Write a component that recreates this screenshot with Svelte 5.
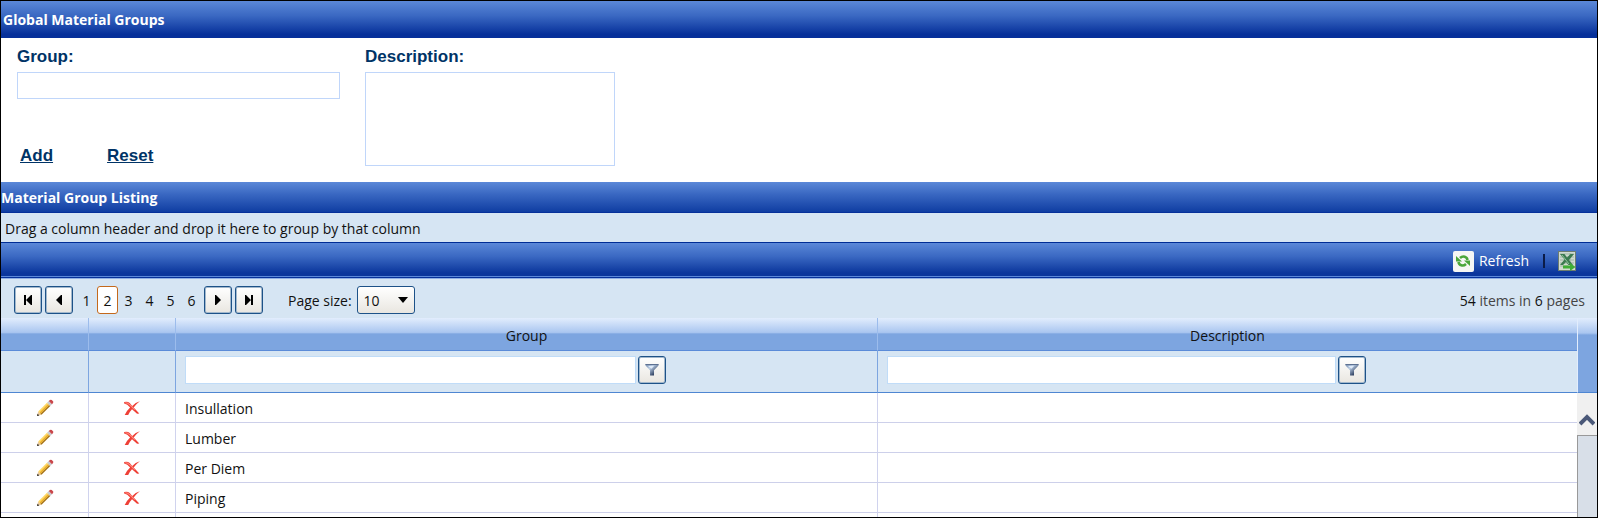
<script>
  // Material group maintenance: entry form on top, paged and filterable grid below.
  let group = $state('')
  let description = $state('')
  let groupFilter = $state('')
  let descriptionFilter = $state('')
  let page = $state(2)
  let pageSize = $state('10')

  const pages = [1, 2, 3, 4, 5, 6]
  const total = 54
  let rows = $state([
    { group: 'Insullation', description: '' },
    { group: 'Lumber', description: '' },
    { group: 'Per Diem', description: '' },
    { group: 'Piping', description: '' },
  ])

  let shown = $derived(
    rows.filter(
      (r) =>
        r.group.toLowerCase().includes(groupFilter.toLowerCase()) &&
        r.description.toLowerCase().includes(descriptionFilter.toLowerCase()),
    ),
  )

  function add(e) {
    e.preventDefault()
    if (!group) return
    rows.push({ group, description })
    group = ''
    description = ''
  }

  function reset(e) {
    e.preventDefault()
    group = ''
    description = ''
  }

  function remove(row) {
    rows = rows.filter((r) => r !== row)
  }
</script>

{#snippet funnel()}
  <svg width="14" height="14" viewBox="0 0 14 14">
    <defs>
      <linearGradient id="funnel-fill" x1="0" y1="0" x2="1" y2="1">
        <stop offset="0" stop-color="#6f86a8" />
        <stop offset="0.35" stop-color="#b9cce4" />
        <stop offset="0.75" stop-color="#3b4c6b" />
        <stop offset="1" stop-color="#17233c" />
      </linearGradient>
    </defs>
    <path d="M.5 1h13v1.5L9 7.200v5.300H5V7.200L.5 2.500z" fill="url(#funnel-fill)" />
    <path d="M.5 1.500h13" stroke="#5d7192" />
    <path d="M3 3h6L6.500 5.800z" fill="#dfeaf8" />
  </svg>
{/snippet}

<div class="window">
  <h1 class="bar">Global Material Groups</h1>

  <form class="entry" onsubmit={add}>
    <div class="field left">
      <label for="group">Group:</label>
      <input id="group" type="text" bind:value={group} />
      <div class="actions">
        <a href="#add" onclick={add}>Add</a>
        <a href="#reset" onclick={reset}>Reset</a>
      </div>
    </div>
    <div class="field">
      <label for="description">Description:</label>
      <textarea id="description" bind:value={description}></textarea>
    </div>
  </form>

  <h2 class="bar listing">Material Group Listing</h2>
  <div class="grouping">Drag a column header and drop it here to group by that column</div>

  <div class="commands">
    <button class="refresh">
      <span class="tile">
        <svg width="16" height="16" viewBox="0 0 16 16" fill="none" stroke="#4ba63a" stroke-width="2.600">
          <path d="M12.500 7C12 3.500 8 2.200 5 5" />
          <path d="M3.500 9c.5 3.500 4.500 4.800 7.500 2" />
          <path d="M1 3v5.500h6z" fill="#4ba63a" stroke="none" />
          <path d="M15 13V7.500H9z" fill="#4ba63a" stroke="none" />
        </svg>
      </span>
      Refresh
    </button>
    <span class="divider"></span>
    <button class="export" aria-label="Export to Excel">
      <svg width="18" height="20" viewBox="0 0 18 20">
        <rect x=".5" y=".5" width="17" height="19" fill="#cfdacf" stroke="#6d7d70" />
        <path d="M2 3h14M2 6h14M2 9h14M2 12h14M2 15h8M12 2v10" stroke="#9eb5a3" />
        <path d="M2 3h4.500L9 6.500 12.500 3H16l-5 6 4 5h-4.500L8 11l-3 3H2l4.500-5.500z" fill="#3b7a50" />
        <path d="M4 4l7 9" stroke="#8fc49a" />
        <path d="M5 14.500h7V12l5.500 4-5.500 4v-2.500H5z" fill="#3fae35" />
      </svg>
    </button>
  </div>

  <div class="pager">
    <button class="nav" aria-label="First page" onclick={() => (page = 1)}>
      <svg width="12" height="12" viewBox="0 0 12 12"><path d="M2 1h2v10H2zM9 1v10L4 6zM9 1h1v10H9z" /></svg>
    </button>
    <button class="nav" aria-label="Previous page" onclick={() => (page = Math.max(1, page - 1))}>
      <svg width="12" height="12" viewBox="0 0 12 12"><path d="M9 1v10H8L3 6l5-5z" /></svg>
    </button>
    <div class="numbers">
      {#each pages as p (p)}
        <button class="num" class:current={p === page} onclick={() => (page = p)}>{p}</button>
      {/each}
    </div>
    <button class="nav" aria-label="Next page" onclick={() => (page = Math.min(pages.length, page + 1))}>
      <svg width="12" height="12" viewBox="0 0 12 12"><path d="M3 1v10h1l5-5-5-5z" /></svg>
    </button>
    <button class="nav" aria-label="Last page" onclick={() => (page = pages.length)}>
      <svg width="12" height="12" viewBox="0 0 12 12"><path d="M8 1h2v10H8zM2 1h1l5 5-5 5H2z" /></svg>
    </button>
    <label for="size">Page size:</label>
    <span class="size">
      <select id="size" bind:value={pageSize}>
        <option>10</option>
        <option>20</option>
        <option>50</option>
      </select>
      <svg width="10" height="6" viewBox="0 0 10 6"><path d="M0 0h10L5 6z" /></svg>
    </span>
    <span class="info"><b>{total}</b> items in <b>{pages.length}</b> pages</span>
  </div>

  <div class="grid">
    <table>
      <colgroup>
        <col class="edit" />
        <col class="delete" />
        <col />
        <col />
      </colgroup>
      <thead>
        <tr class="head">
          <th></th>
          <th></th>
          <th>Group</th>
          <th>Description</th>
        </tr>
        <tr class="filter">
          <td></td>
          <td></td>
          <td>
            <div class="search">
              <input type="text" aria-label="Filter group" bind:value={groupFilter} />
              <button class="nav" aria-label="Group filter options">{@render funnel()}</button>
            </div>
          </td>
          <td>
            <div class="search">
              <input type="text" aria-label="Filter description" bind:value={descriptionFilter} />
              <button class="nav" aria-label="Description filter options">{@render funnel()}</button>
            </div>
          </td>
        </tr>
      </thead>
      <tbody>
        {#each shown as row (row.group)}
          <tr>
            <td class="tool">
              <button aria-label="Edit {row.group}">
                <svg width="18" height="18" viewBox="0 0 18 18">
                  <path d="M1 17l1.200-4.500 3.300 3.300z" fill="#e8c999" />
                  <path d="M1 17l.6-2.300 1.700 1.700z" fill="#222" />
                  <path d="M2.200 12.500L11 3.700l1.100 1.100-8.800 8.800z" fill="#ffd964" />
                  <path d="M3.300 13.600l8.800-8.800 1.100 1.100-8.800 8.800z" fill="#f2b21c" />
                  <path d="M4.400 14.700l8.800-8.800 1.100 1.100-8.800 8.800z" fill="#a87416" />
                  <path d="M11 3.700l1.700-1.700L16 5.300 14.300 7z" fill="#c9ccd2" />
                  <path d="M12.700 2L14 .9q1-.6 1.800.2l1.200 1.200q.8.800 0 1.800L16 5.300z" fill="#c9474b" />
                </svg>
              </button>
            </td>
            <td class="tool">
              <button aria-label="Delete {row.group}" onclick={() => remove(row)}>
                <svg width="18" height="16" viewBox="0 0 16 16" preserveAspectRatio="none">
                  <path d="M1 2q3-1 5 1l2.200 3Q11 2.500 15 1.200 11.500 4 9.500 7.500L14.500 13.500 12.500 13.700 8 9.300Q5.800 12 4.600 15L1.500 15Q3 11 6.300 7.500 4 4 1 3.500z" fill="#ee4036" />
                  <path d="M2 2.700q2.500 0 4 2l4.500 5" stroke="#ff8a80" fill="none" />
                </svg>
              </button>
            </td>
            <td>{row.group}</td>
            <td>{row.description}</td>
          </tr>
        {/each}
        <tr><td></td><td></td><td></td><td></td></tr>
      </tbody>
    </table>
    <div class="side">
      <div class="corner"></div>
      <button class="up" aria-label="Scroll up">
        <svg width="16" height="12" viewBox="0 0 16 12"><path d="M1 10l7-7 7 7" fill="none" stroke="#4a5878" stroke-width="4" /></svg>
      </button>
      <div class="thumb"></div>
    </div>
  </div>
</div>

<style>
  :global(body) {
    margin: 0;
  }
  .window {
    box-sizing: border-box;
    height: 100vh;
    display: flex;
    flex-direction: column;
    overflow: hidden;
    border: 1px solid #000;
    background: #fff;
    color: #111;
    font: 14px/20px 'Open Sans', 'Noto Sans', sans-serif;
  }
  .window > * {
    flex: none;
  }
  button,
  input,
  select,
  textarea {
    box-sizing: border-box;
    margin: 0;
    padding: 0;
    font: inherit;
    color: inherit;
  }
  button {
    border: 0;
    background: none;
    cursor: pointer;
  }
  svg {
    display: block;
  }

  .bar {
    margin: 0;
    padding: 9px 2px 8px;
    background: linear-gradient(#5b88d8, #3a68c2 40%, #06309a 90%);
    color: #fff;
    font-size: 14px;
    font-weight: 700;
  }
  .listing {
    padding: 6px 0 4px;
    border-bottom: 1px solid #06309a;
    background: linear-gradient(#5b88d8, #3a68c2 40%, #0f3da2);
  }

  .entry {
    display: flex;
    gap: 25px;
    padding: 9px 16px 16px;
    color: #036;
    font: bold 17px/20px 'Liberation Sans', Arial, sans-serif;
  }
  .field {
    display: flex;
    flex-direction: column;
    gap: 5px;
  }
  .left {
    width: 323px;
  }
  .field input,
  .field textarea {
    border: 1px solid #c0d6fa;
    background: #fff;
    font-weight: 400;
  }
  .field input {
    height: 27px;
    padding: 0 4px;
  }
  .field textarea {
    width: 250px;
    height: 94px;
    resize: none;
  }
  .actions {
    display: flex;
    gap: 54px;
    margin-top: auto;
    padding-left: 3px;
  }
  .actions a {
    color: inherit;
  }

  .grouping {
    padding: 6px 4px 3px;
    background: #d6e5f3;
  }
  .commands {
    display: flex;
    align-items: center;
    justify-content: flex-end;
    height: 32px;
    padding: 2px 21px 0 0;
    border-top: 1px solid #002d96;
    border-bottom: 1px solid #06309a;
    box-shadow: inset 0 -1px #5b88d8;
    background: linear-gradient(#5b88d8, #3a68c2 40%, #0b369c 88%);
    color: #fff;
  }
  .refresh {
    display: flex;
    align-items: center;
    gap: 5px;
  }
  .tile {
    display: grid;
    place-items: center;
    width: 21px;
    height: 21px;
    border-radius: 2px;
    background: #f6f6f4;
  }
  .divider {
    width: 2px;
    height: 14px;
    margin: 0 13px 0 14px;
    background: #0b1c48;
  }

  .pager {
    display: flex;
    align-items: center;
    padding: 7px 12px 4px 13px;
    border-top: 1px solid #8fb0e4;
    background: #d6e5f3;
  }
  .nav {
    box-sizing: border-box;
    display: grid;
    place-items: center;
    width: 28px;
    height: 28px;
    border: 1px solid #1d5288;
    border-radius: 3px;
    box-shadow: inset 0 0 0 1px #a3b8cc;
    background: linear-gradient(#fff, #f4f3f0 50%, #e9e6e0);
  }
  .pager .nav {
    margin-right: 3px;
  }
  .numbers {
    display: flex;
    margin-right: 2px;
  }
  .num {
    width: 21px;
    height: 28px;
    padding-top: 2px;
    border: 1px solid transparent;
    border-radius: 3px;
  }
  .current {
    border-color: #c4691c;
    background: #fff;
  }
  .pager label {
    margin: 0 5px 0 22px;
    padding-top: 2px;
  }
  .size {
    display: grid;
    align-items: center;
  }
  .size select,
  .size svg {
    grid-area: 1 / 1;
  }
  .size svg {
    justify-self: end;
    margin-right: 7px;
    pointer-events: none;
  }
  .size select {
    width: 58px;
    height: 28px;
    padding: 2px 0 0 6px;
    appearance: none;
    border: 1px solid #1d5288;
    border-radius: 3px;
    background: linear-gradient(#fff, #f4f3f0 50%, #e9e6e0);
  }
  .info {
    margin-left: auto;
    padding-top: 2px;
    color: #444;
  }
  .info b {
    color: #111;
    font-weight: 400;
  }

  .window > .grid {
    flex: 1;
    min-height: 0;
    display: flex;
    align-items: stretch;
    overflow: hidden;
  }
  table {
    flex: 1;
    align-self: flex-start;
    table-layout: fixed;
    border-collapse: separate;
    border-spacing: 0;
  }
  .edit {
    width: 88px;
  }
  .delete {
    width: 87px;
  }
  th,
  td {
    box-sizing: border-box;
    height: 30px;
    padding: 2px 9px 0;
    border-right: 1px solid #d0d3ee;
    border-bottom: 1px solid #cdd0ea;
    font-weight: 400;
    text-align: left;
  }
  th:last-child,
  td:last-child {
    border-right: 0;
  }
  .head th {
    height: 33px;
    padding-top: 3px;
    border-right-color: #9cbcec;
    border-bottom-color: #5b8bd8;
    background: linear-gradient(#e2edfd, #aac6f0 45%, #7da5e0 50%);
    text-align: center;
  }
  .filter td {
    height: 42px;
    padding-top: 0;
    border-right-color: #7da5e0;
    border-bottom-color: #4e86d2;
    background: #d6e5f3;
  }
  .search {
    display: flex;
    gap: 2px;
    padding-bottom: 4px;
  }
  .search input {
    width: 66%;
    height: 28px;
    padding: 0 4px;
    border: 1px solid #c0dcf8;
    background: #fff;
  }
  .tool {
    padding: 0;
  }
  .tool button {
    display: block;
    margin: 0 auto;
  }
  .side {
    display: flex;
    flex-direction: column;
    width: 20px;
  }
  .corner {
    box-sizing: border-box;
    height: 75px;
    border-left: 1px solid #e2edfd;
    border-bottom: 1px solid #4e86d2;
    background: linear-gradient(#e2edfd, #aac6f0 15px, #7da5e0 17px);
  }
  .up {
    display: grid;
    place-items: center;
    height: 42px;
    padding-top: 12px;
    background: #f0f0f0;
  }
  .thumb {
    flex: 1;
    border: solid #999;
    border-width: 1px 0 0 1px;
    background: #d8dfe8;
  }
</style>
